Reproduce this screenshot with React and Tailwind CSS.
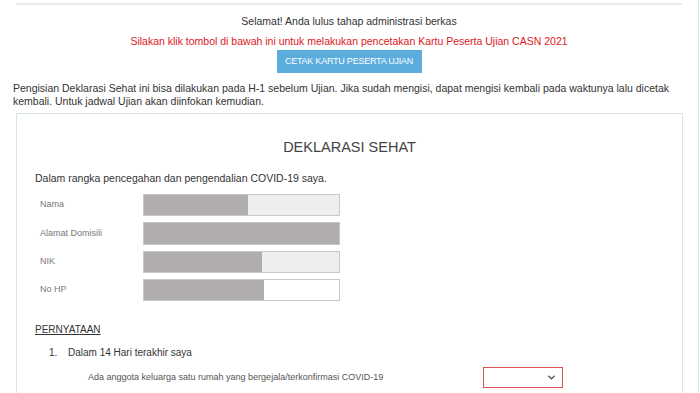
import { FiChevronDown } from "react-icons/fi";

const rows = [
  { label: "Nama", fill: "w-[104px]", bg: "bg-[#eeeeee]", h: "h-[22px]" },
  { label: "Alamat Domisili", fill: "w-full", bg: "bg-[#eeeeee]", h: "h-[23px]" },
  { label: "NIK", fill: "w-[118px]", bg: "bg-[#eeeeee]", h: "h-[22px]" },
  { label: "No HP", fill: "w-[120px]", bg: "bg-white", h: "h-[22px]" },
];

export default function App() {
  return (
    <div
      className="w-[699px] h-[393px] overflow-hidden border-r border-[#dbe7ea] bg-white text-[#333]"
      style={{ fontFamily: '"Liberation Sans", Arial, sans-serif' }}
    >
      <div className="mx-[16px] mt-[3px] border-t-2 border-[#ececec]" />

      <div className="flex flex-col items-center pt-[9px]">
        <p className="text-[10.5px] leading-[14px] text-[#333]">
          Selamat! Anda lulus tahap administrasi berkas
        </p>
        <p className="mt-[6px] text-[10.5px] leading-[14px] text-[#e0161e]">
          Silakan klik tombol di bawah ini untuk melakukan pencetakan Kartu Peserta Ujian CASN 2021
        </p>
        <button className="mt-[2px] w-[145px] h-[23px] bg-[#5badde] text-white text-[9px] tracking-tight">
          CETAK KARTU PESERTA UJIAN
        </button>
      </div>

      <p className="mt-[9px] pl-[13px] pr-[8px] text-[10.5px] leading-[13px] text-[#333]">
        Pengisian Deklarasi Sehat ini bisa dilakukan pada H-1 sebelum Ujian. Jika sudah mengisi, dapat mengisi kembali pada waktunya lalu dicetak kembali. Untuk jadwal Ujian akan diinfokan kemudian.
      </p>

      <div className="ml-[16px] w-[667px] mt-[5px] border border-[#d9e7ea] px-[18px] pb-[20px]">
        <h2 className="mt-[23px] text-center text-[14.5px] leading-[20px] text-[#444] font-normal">
          DEKLARASI SEHAT
        </h2>
        <p className="mt-[14px] text-[10.5px] leading-[14px] text-[#333]">
          Dalam rangka pencegahan dan pengendalian COVID-19 saya.
        </p>

        <div className="mt-[9px] flex flex-col gap-[6px]">
          {rows.map((r) => (
            <div key={r.label} className="flex items-center">
              <span className="w-[108px] pl-[5px] text-[9px] text-[#777]">{r.label}</span>
              <div className={`w-[197px] ${r.h} ${r.bg} border border-[#c8c8c8] flex`}>
                <div className={`${r.fill} h-full bg-[#b1adac]`} />
              </div>
            </div>
          ))}
        </div>

        <p className="mt-[22px] text-[10px] leading-[13px] text-[#333] underline">PERNYATAAN</p>

        <div className="mt-[10px] flex text-[10px] leading-[13px] text-[#333]">
          <span className="w-[19px] pl-[14px] box-content">1.</span>
          <span>Dalam 14 Hari terakhir saya</span>
        </div>

        <div className="mt-[8px] flex items-center">
          <span className="pl-[53px] w-[448px] text-[9px] text-[#555]">
            Ada anggota keluarga satu rumah yang bergejala/terkonfirmasi COVID-19
          </span>
          <div className="w-[80px] h-[21px] border border-[#d9534f] flex items-center justify-end pr-[5px] bg-white">
            <FiChevronDown className="w-[11px] h-[11px] text-[#444]" strokeWidth={3} />
          </div>
        </div>
      </div>
    </div>
  );
}
